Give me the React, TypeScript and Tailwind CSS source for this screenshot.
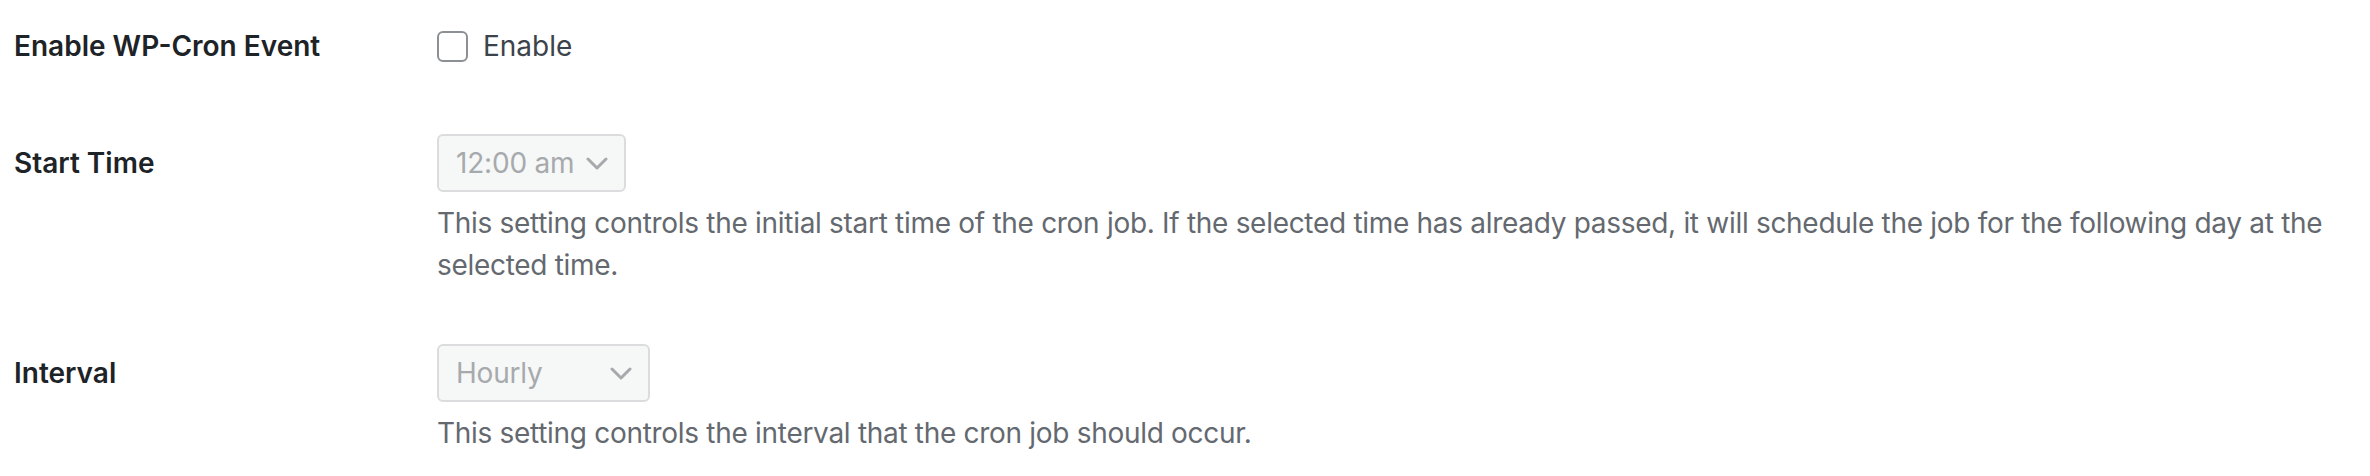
function Chevron() {
    return (
        <svg width="22" height="13" viewBox="0 0 22 13" fill="none" className="shrink-0">
            <path d="M2 2l9 9 9-9" stroke="#a7aaad" strokeWidth="3" strokeLinecap="round" strokeLinejoin="round" />
        </svg>
    );
}

function FakeSelect({ value, width }: { value: string; width: string }) {
    return (
        <div
            className={`${width} h-[58px] flex items-center justify-between pl-[17px] pr-[16px] bg-[#f6f7f7] border-2 border-[#dcdcde] rounded-[6px] text-[#a7aaad] tracking-[-0.2px] cursor-default`}
        >
            <span>{value}</span>
            <Chevron />
        </div>
    );
}

export default function App() {
    return (
        <div className="w-[2370px] h-[476px] bg-white px-[14px] font-['Inter','Noto_Sans',sans-serif] text-[28px] antialiased">
            {/* Enable */}
            <div className="flex items-center pt-[28px]">
                <div className="w-[423px] shrink-0 font-semibold text-[#1d2327] leading-[36px]">Enable WP-Cron Event</div>
                <label className="flex items-center gap-[15px] text-[#3c434a] leading-[36px]">
                    <span className="w-[31px] h-[31px] border-2 border-[#8c8f94] rounded-[6px] bg-white" />
                    Enable
                </label>
            </div>

            {/* Start time */}
            <div className="flex items-start mt-[70px]">
                <div className="w-[423px] shrink-0 h-[58px] flex items-center font-semibold text-[#1d2327]">Start Time</div>
                <div className="flex-1">
                    <FakeSelect value="12:00 am" width="w-[189px]" />
                    <p className="mt-[10px] leading-[42px] text-[#646970] tracking-[-0.3px]">
                        This setting controls the initial start time of the cron job. If the selected time has already passed, it will schedule the job for the following day at the selected time.
                    </p>
                </div>
            </div>

            {/* Interval */}
            <div className="flex items-start mt-[58px]">
                <div className="w-[423px] shrink-0 h-[58px] flex items-center font-semibold text-[#1d2327]">Interval</div>
                <div className="flex-1">
                    <FakeSelect value="Hourly" width="w-[213px]" />
                    <p className="mt-[10px] leading-[42px] text-[#646970] tracking-[-0.3px]">
                        This setting controls the interval that the cron job should occur.
                    </p>
                </div>
            </div>
        </div>
    );
}
